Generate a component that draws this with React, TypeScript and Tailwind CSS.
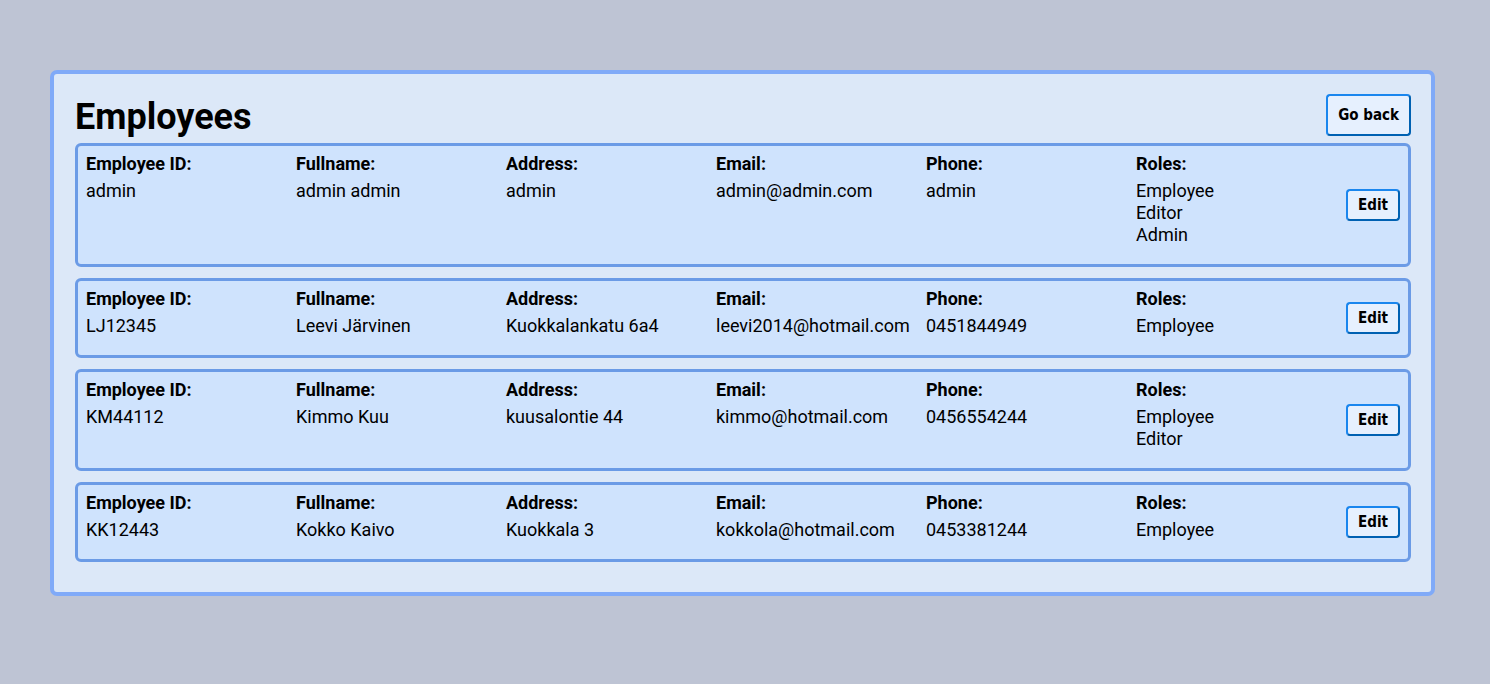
import React from "react";

type Emp = {
  id: string;
  name: string;
  address: string;
  email: string;
  phone: string;
  roles: string[];
};

const employees: Emp[] = [
  { id: "admin", name: "admin admin", address: "admin", email: "admin@admin.com", phone: "admin", roles: ["Employee", "Editor", "Admin"] },
  { id: "LJ12345", name: "Leevi Järvinen", address: "Kuokkalankatu 6a4", email: "leevi2014@hotmail.com", phone: "0451844949", roles: ["Employee"] },
  { id: "KM44112", name: "Kimmo Kuu", address: "kuusalontie 44", email: "kimmo@hotmail.com", phone: "0456554244", roles: ["Employee", "Editor"] },
  { id: "KK12443", name: "Kokko Kaivo", address: "Kuokkala 3", email: "kokkola@hotmail.com", phone: "0453381244", roles: ["Employee"] },
];

function Field({ label, values }: { label: string; values: string[] }) {
  return (
    <div className="w-[210px] shrink-0">
      <div className="font-bold text-[18px] leading-[21px]">{label}</div>
      <div className="mt-[6px] text-[18px] leading-[22px]">
        {values.map((v, i) => (
          <div key={i}>{v}</div>
        ))}
      </div>
    </div>
  );
}

function Btn({ children, big }: { children: React.ReactNode; big?: boolean }) {
  return (
    <button
      className={
        "font-['DejaVu_Sans_Condensed','DejaVu_Sans',sans-serif] font-stretch-condensed font-bold text-[15px] leading-[18px] text-black bg-[#e6f0fe] rounded-[4px] border-2 border-[#1a86ee] border-r-[#0061b2] border-b-[#0061b2] px-[10px] " +
        (big ? "py-[10px]" : "py-[5px]")
      }
    >
      {children}
    </button>
  );
}

export default function App() {
  return (
    <div className="min-h-screen w-full bg-[#bec4d4] pt-[70px] font-['Roboto',sans-serif] text-black">
      <div className="ml-[50px] w-[1385px] h-[526px] border-4 border-[#80aaf8] rounded-[7px] bg-[#dce8f8] pl-[21px] pr-[20px] pt-[20px]">
        <div className="flex items-start justify-between">
          <h1 className="pt-[2px] text-[36px] leading-[42px] font-bold">Employees</h1>
          <Btn big>Go back</Btn>
        </div>
        <div className="mt-[5px] flex flex-col gap-[11px]">
          {employees.map((e) => (
            <div
              key={e.id}
              className="flex items-center border-[3px] border-[#6b9be6] rounded-[6px] bg-[#cfe3fd] px-[8px] pt-[7px] pb-[18px]"
            >
              <div className="flex self-start">
                <Field label="Employee ID:" values={[e.id]} />
                <Field label="Fullname:" values={[e.name]} />
                <Field label="Address:" values={[e.address]} />
                <Field label="Email:" values={[e.email]} />
                <Field label="Phone:" values={[e.phone]} />
                <Field label="Roles:" values={e.roles} />
              </div>
              <div className="ml-auto self-center -mb-[11px]">
                <Btn>Edit</Btn>
              </div>
            </div>
          ))}
        </div>
      </div>
    </div>
  );
}
